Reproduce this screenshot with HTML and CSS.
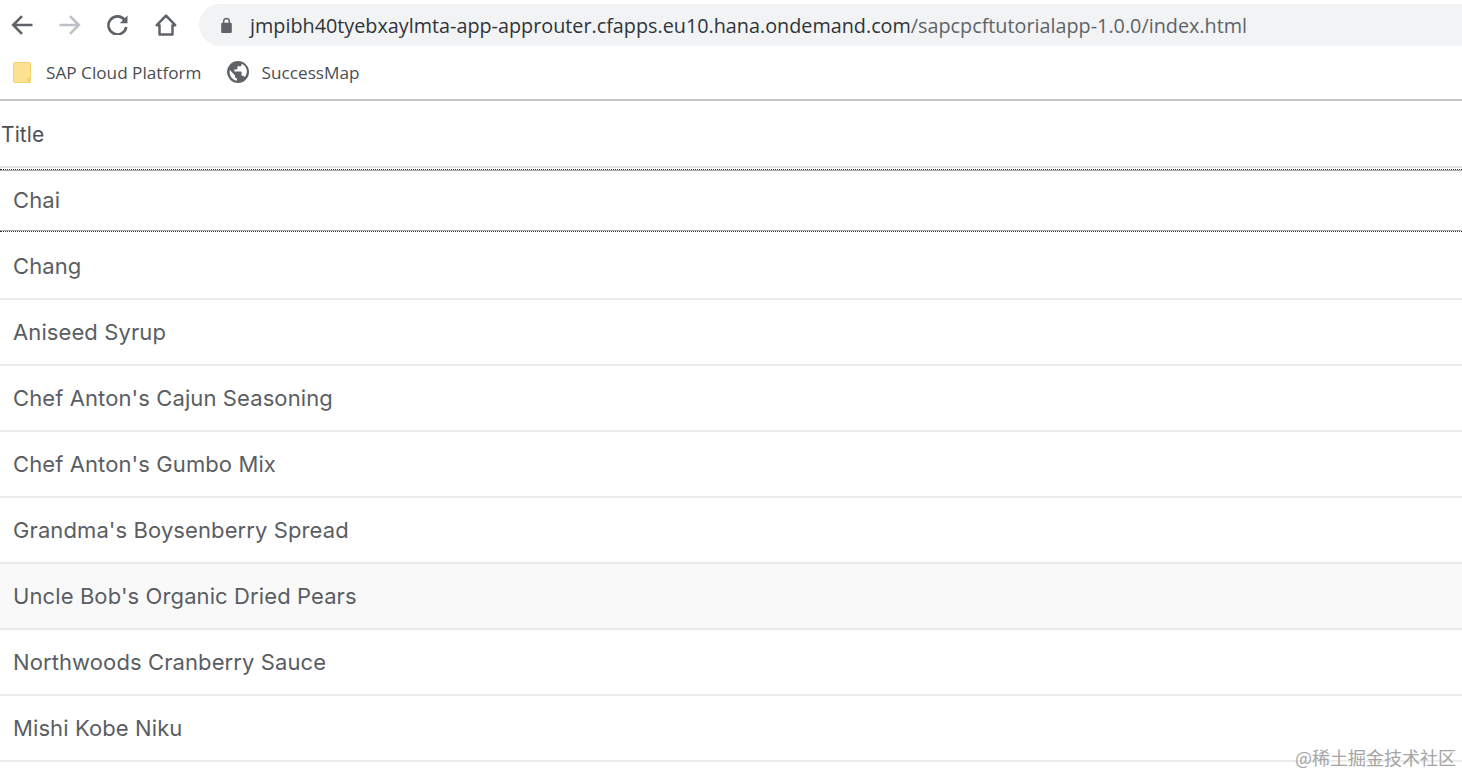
FILE: index.html
```html
<!DOCTYPE html>
<html lang="en">
<head>
    <meta charset="UTF-8">
    <title>Products</title>
    <link rel="stylesheet" href="styles.css">
</head>
<body>
    <div class="toolbar">
        <svg class="nav-icon" viewBox="0 0 22 20"><path d="M21.500 10H2.500M11 1.200L2.200 10l8.800 8.800" fill="none" stroke="#5f6368" stroke-width="2.600"/></svg>
        <svg class="nav-icon" viewBox="0 0 22 20"><path d="M0.500 10H19.500M11 1.200L19.800 10 11 18.800" fill="none" stroke="#bdc1c6" stroke-width="2.600"/></svg>
        <svg class="nav-icon nav-reload" viewBox="0 0 21 20"><path d="M17.800 5.200A9 9 0 1 0 19.300 12" fill="none" stroke="#5f6368" stroke-width="2.600"/><path d="M20.500 0.500V8.200H12.800z" fill="#5f6368"/></svg>
        <svg class="nav-icon nav-home" viewBox="0 0 24 22"><path d="M12 1.700L2.800 11.200H5.500V20.500H18.500V11.200H21.200z" fill="none" stroke="#5f6368" stroke-width="2.500" stroke-linejoin="round"/></svg>
        <div class="address-bar">
            <svg class="lock" viewBox="0 0 12 16"><path d="M10 5.500H9.300V4a3.300 3.300 0 0 0-6.600 0v1.500H2a1 1 0 0 0-1 1V14a1 1 0 0 0 1 1h8a1 1 0 0 0 1-1V6.500a1 1 0 0 0-1-1zM4 4a2 2 0 0 1 4 0v1.500H4z" fill="#5f6368"/></svg>
            <span class="url">jmpibh40tyebxaylmta-app-approuter.cfapps.eu10.hana.ondemand.com<span class="url-path">/sapcpcftutorialapp-1.0.0/index.html</span></span>
        </div>
    </div>

    <div class="bookmarks">
        <div class="bookmark">
            <span class="note-icon"></span>
            <span>SAP Cloud Platform</span>
        </div>
        <div class="bookmark bookmark-globe">
            <svg class="globe" viewBox="1.500 1.500 21 21"><path d="M12 1.500a10.500 10.500 0 1 0 0 21 10.500 10.500 0 0 0 0-21zM4 12c0-.7.100-1.300.2-1.900L9 15v1c0 1.100.9 2 2 2v2.400A8 8 0 0 1 4 12zm14.300 4.900c-.3-.8-1-1.400-1.900-1.400h-1v-3c0-.6-.4-1-1-1H8.500v-2h2c.6 0 1-.4 1-1v-2h2c1.100 0 2-.9 2-2v-.400a8 8 0 0 1 2.800 12.800z" fill="#5f6368"/></svg>
            <span>SuccessMap</span>
        </div>
    </div>

    <div class="table">
        <div class="table-head">Title</div>
        <div class="row row-focus">Chai</div>
        <div class="row">Chang</div>
        <div class="row">Aniseed Syrup</div>
        <div class="row">Chef Anton's Cajun Seasoning</div>
        <div class="row">Chef Anton's Gumbo Mix</div>
        <div class="row">Grandma's Boysenberry Spread</div>
        <div class="row row-hover">Uncle Bob's Organic Dried Pears</div>
        <div class="row">Northwoods Cranberry Sauce</div>
        <div class="row">Mishi Kobe Niku</div>
    </div>

    <div class="watermark">@稀土掘金技术社区</div>
</body>
</html>
```

FILE: styles.css
```css
body {
    margin: 0;
    height: 775px;
    overflow: hidden;
    background-color: #ffffff;
    font-family: "Open Sans", "Liberation Sans", sans-serif;
    color: #32363a;
}
.toolbar {
    display: flex;
    align-items: center;
    height: 50px;
    padding-left: 11px;
    box-sizing: border-box;
}
.nav-icon {
    width: 22px;
    height: 20px;
    margin-right: 26px;
    flex-shrink: 0;
}
.nav-reload {
    width: 21px;
}
.nav-home {
    width: 24px;
    height: 22px;
    margin-right: 21px;
}
.address-bar {
    flex: 1;
    display: flex;
    align-items: center;
    height: 42px;
    padding-left: 21px;
    background-color: #f1f3f4;
    border-radius: 21px 0 0 21px;
}
.lock {
    width: 13px;
    height: 17px;
    margin-right: 17px;
}
.url {
    font-size: 19.800px;
    color: #303438;
    white-space: nowrap;
}
.url-path {
    color: #5f6368;
}
.bookmarks {
    display: flex;
    align-items: center;
    height: 51px;
    padding-left: 13px;
    padding-bottom: 5px;
    box-sizing: border-box;
    border-bottom: 2px solid #c4c4c4;
    font-size: 17.200px;
    color: #4a4e52;
}
.bookmark {
    display: flex;
    align-items: center;
}
.bookmark-globe {
    margin-left: 25px;
}
.note-icon {
    position: relative;
    width: 18px;
    height: 21px;
    margin-right: 15px;
    background-color: #fde293;
    border: 1px solid #f5d36b;
    border-radius: 2px;
    box-sizing: border-box;
}
.note-icon::after {
    content: "";
    position: absolute;
    right: -1px;
    bottom: -1px;
    width: 4px;
    height: 6px;
    background-color: #f7d774;
    border-radius: 2px 0 2px 0;
}
.globe {
    width: 22px;
    height: 22px;
    margin-right: 13px;
}
.table {
    font-family: Inter, sans-serif;
    font-size: 22px;
    letter-spacing: 0.1px;
}
.table-head {
    display: flex;
    align-items: center;
    height: 67px;
    padding-left: 1px;
    padding-top: 1px;
    box-sizing: border-box;
    border-bottom: 2px solid #e2e2e2;
    font-size: 21px;
    color: #4c5055;
}
.row {
    display: flex;
    align-items: center;
    height: 66px;
    padding-left: 13px;
    box-sizing: border-box;
    border-bottom: 2px solid #ebebeb;
    color: #5a5e63;
}
.row-focus {
    position: relative;
    border-bottom: none;
    padding-bottom: 2px;
}
.row-focus::after {
    content: "";
    position: absolute;
    top: 1px;
    left: 0;
    right: 0;
    bottom: 2px;
    border-top: 1px dotted #333333;
    border-bottom: 1px dotted #333333;
    box-shadow: inset 0 1px #a8a8a8, inset 0 -1px #a8a8a8;
}
.row-hover {
    background-color: #f9f9f9;
}
.watermark {
    position: absolute;
    right: 6px;
    top: 744px;
    font-family: "Noto Sans CJK SC", sans-serif;
    font-size: 18px;
    color: #a5a5a5;
}
```
